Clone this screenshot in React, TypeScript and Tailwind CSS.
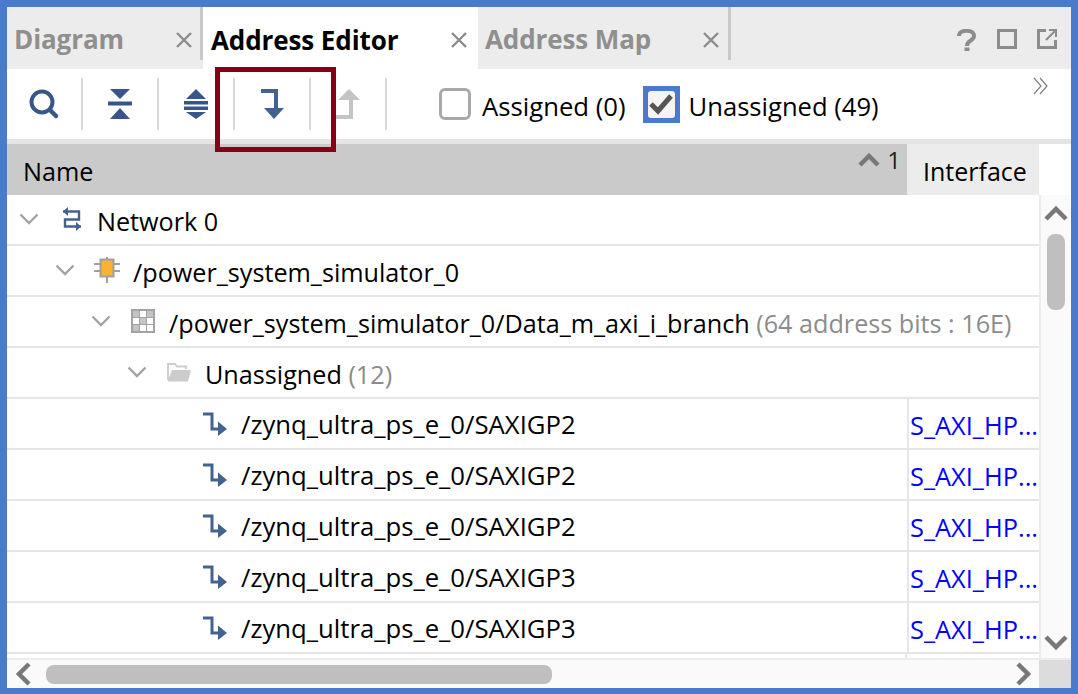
const FONT = "font-['Open_Sans','Noto_Sans',sans-serif]";

function Close() {
  return (
    <svg width="18" height="18" viewBox="0 0 18 18" className="shrink-0">
      <path d="M2 2l14 14M16 2L2 16" stroke="#8c8c8c" strokeWidth="2.4" />
    </svg>
  );
}

function Chevron() {
  return (
    <svg width="20" height="12" viewBox="0 0 20 12" className="shrink-0">
      <path d="M1.5 1.5L10 10l8.5-8.5" fill="none" stroke="#a3a3a3" strokeWidth="2.4" />
    </svg>
  );
}

function NetworkIcon() {
  return (
    <svg width="20" height="24" viewBox="0 0 20 24" className="shrink-0">
      <path d="M1 4.500h16v8H3v7h16" fill="none" stroke="#44628f" strokeWidth="2.400" />
      <path d="M6 0L1 4.500l5 4.500zM14 15l5 4.500-5 4.500z" fill="#44628f" />
    </svg>
  );
}

function CellIcon() {
  return (
    <svg width="26" height="26" viewBox="0 0 26 26" className="shrink-0">
      <path d="M13 0v6M0 7h6M20 7h6M0 14h6M20 14h6M13 19v7" stroke="#a0a0a0" strokeWidth="2" />
      <rect x="6.500" y="2.500" width="13" height="17" fill="#f9b233" stroke="#a0a0a0" strokeWidth="2" />
    </svg>
  );
}

function GridIcon() {
  const white = [[1, 0], [0, 1], [2, 1], [1, 2], [2, 2]];
  return (
    <svg width="24" height="24" viewBox="0 0 24 24" className="shrink-0">
      <rect width="24" height="24" fill="#a3a3a3" />
      {[0, 1, 2].flatMap((y) =>
        [0, 1, 2].map((x) => (
          <rect key={`${x}${y}`} x={2 + x * 7} y={2 + y * 7} width="6" height="6"
            fill={white.some(([a, b]) => a === x && b === y) ? '#ffffff' : '#c4c4c4'} />
        )),
      )}
    </svg>
  );
}

function FolderIcon() {
  return (
    <svg width="24" height="20" viewBox="0 0 24 20" className="shrink-0">
      <path d="M1 18V2h7l2 2.500h9V7" fill="none" stroke="#cfcfcf" strokeWidth="2" />
      <path d="M0.500 19.500L5 8h19l-3 11.500z" fill="#cccccc" />
    </svg>
  );
}

function SlaveIcon() {
  return (
    <svg width="24" height="24" viewBox="0 0 24 24" className="shrink-0">
      <path d="M0 2h9v15h8" fill="none" stroke="#44628f" strokeWidth="3" />
      <path d="M15 9.500l9 7.500-9 7z" fill="#44628f" />
    </svg>
  );
}

const ROWS = [
  { pad: 'pl-[12px]', icon: <NetworkIcon />, gap: 'gap-[23px]', textGap: 'gap-[15px]', text: 'Network 0' },
  { pad: 'pl-[48px]', icon: <CellIcon />, gap: 'gap-[19px]', textGap: 'gap-[13px]', text: '/power_system_simulator_0' },
  { pad: 'pl-[84px]', icon: <GridIcon />, gap: 'gap-[20px]', textGap: 'gap-[14px]', text: '/power_system_simulator_0/Data_m_axi_i_branch', note: '(64 address bits : 16E)' },
  { pad: 'pl-[120px]', icon: <FolderIcon />, gap: 'gap-[20px]', textGap: 'gap-[14px]', text: 'Unassigned', note: '(12)' },
];

const LEAVES = ['SAXIGP2', 'SAXIGP2', 'SAXIGP2', 'SAXIGP3', 'SAXIGP3'];

function ToolButton({ children }: { children: React.ReactNode }) {
  return (
    <div className="w-[76px] h-[52px] border-r-2 border-[#d9d9d9] flex items-center justify-center shrink-0">
      {children}
    </div>
  );
}

export default function App() {
  return (
    <div className={`${FONT} relative w-[1078px] h-[694px] overflow-hidden bg-white border-t-[7px] border-l-[7px] border-r-[7px] border-b-[6px] border-[#4a7acb] flex flex-col text-[25.2px] text-black`}>
      {/* Tabs */}
      <div className="h-[62px] shrink-0 bg-[#ececec] flex">
        <div className="w-[196px] h-[53px] pt-[12px] border-r-[3px] border-[#c8c8c8] flex items-center justify-between pl-[7px] pr-[7px] font-bold text-[26px] text-[#8f8f8f] tracking-[-0.1px]">
          <span>Diagram</span><Close />
        </div>
        <div className="w-[275px] bg-white flex items-start justify-between pl-[8px] pr-[10px] pt-[13px] font-bold text-[26px] tracking-[-0.1px]">
          <span className="leading-[40px]">Address Editor</span>
          <div className="pt-[11px]"><Close /></div>
        </div>
        <div className="w-[253px] h-[53px] pt-[12px] border-r-[3px] border-[#c8c8c8] flex items-center justify-between pl-[7px] pr-[8px] font-bold text-[26px] text-[#8f8f8f] tracking-[-0.1px]">
          <span>Address Map</span><Close />
        </div>
        <div className="flex-1 flex items-start justify-end gap-[20px] pt-[22px] pr-[14px]">
          <svg width="20" height="22" viewBox="0 0 20 22">
            <path d="M2 7c0-7 15-7 15 0 0 5-7 4-7 10" fill="none" stroke="#8c8c8c" strokeWidth="4" />
            <rect x="7.500" y="18.500" width="5" height="3.500" fill="#8c8c8c" />
          </svg>
          <svg width="20" height="20" viewBox="0 0 20 20">
            <rect x="1.500" y="1.500" width="17" height="17" fill="none" stroke="#8c8c8c" strokeWidth="3" />
          </svg>
          <svg width="20" height="20" viewBox="0 0 20 20">
            <path d="M9 1.500H1.500v17h17V11" fill="none" stroke="#8c8c8c" strokeWidth="3" />
            <path d="M9 11l9-9M12 1h7v7" fill="none" stroke="#8c8c8c" strokeWidth="2" />
          </svg>
        </div>
      </div>

      {/* Toolbar */}
      <div className="h-[70px] shrink-0 flex items-center relative">
        <ToolButton>
          <svg width="30" height="30" viewBox="0 0 30 30">
            <circle cx="13" cy="13" r="10.500" fill="none" stroke="#38568a" strokeWidth="4" />
            <path d="M21 21l6 6" stroke="#38568a" strokeWidth="4.500" strokeLinecap="round" />
          </svg>
        </ToolButton>
        <ToolButton>
          <svg width="24" height="30" viewBox="0 0 24 30">
            <path d="M2 0h20L12 10zM0 12.500h24v4H0zM12 19l10 11H2z" fill="#38568a" />
          </svg>
        </ToolButton>
        <ToolButton>
          <svg width="24" height="30" viewBox="0 0 24 30">
            <path d="M12 0l10 10H2zM0 12h24v3.500H0zM0 17.500h24V21H0zM2 23h20L12 30z" fill="#38568a" />
          </svg>
        </ToolButton>
        <ToolButton>
          <svg width="24" height="30" viewBox="0 0 24 30">
            <path d="M1 2h15v18" fill="none" stroke="#44628f" strokeWidth="4" />
            <path d="M6 19h20L16 30z" fill="#44628f" transform="translate(-2 0)" />
          </svg>
        </ToolButton>
        <ToolButton>
          <svg width="24" height="30" viewBox="0 0 24 30">
            <path d="M0 28h15V9" fill="none" stroke="#c4c4c4" strokeWidth="4" />
            <path d="M4 11h22L15 0z" fill="#c4c4c4" transform="translate(-2 0)" />
          </svg>
        </ToolButton>
        <div className="w-[32px] h-[32px] ml-[52px] rounded-[6px] border-[3px] border-[#a8a8a8] bg-white shrink-0" />
        <span className="ml-[11px] mt-[7px] text-[25.7px]">Assigned (0)</span>
        <div className="ml-[17px] w-[37px] h-[37px] bg-[#4a7acb] p-[5px] shrink-0">
          <div className="w-full h-full bg-[#f4f4f4] rounded-[3px] flex items-center justify-center">
            <svg width="24" height="22" viewBox="0 0 24 22">
              <path d="M2 11l7 7L22 3" fill="none" stroke="#555555" strokeWidth="5" />
            </svg>
          </div>
        </div>
        <span className="ml-[9px] mt-[7px] text-[25.6px]">Unassigned (49)</span>
        <svg width="16" height="18" viewBox="0 0 16 18" className="absolute left-[1026px] top-[8px]">
          <path d="M1 1l7 8-7 8M7 1l7 8-7 8" fill="none" stroke="#808080" strokeWidth="1.200" />
        </svg>
      </div>
      <div className="h-[5px] shrink-0 bg-[#e4e4e4]" />

      {/* Column headers */}
      <div className="h-[51px] shrink-0 flex">
        <div className="w-[900px] bg-[#cacaca] flex items-center justify-between pl-[16px] pr-[6px] relative">
          <span className="mt-[4px]">Name</span>
          <div className="flex items-start gap-[7px] -mt-[20px]">
            <svg width="22" height="14" viewBox="0 0 22 14" className="mt-[6px]">
              <path d="M2 12l9-9 9 9" fill="none" stroke="#787878" strokeWidth="4.500" />
            </svg>
            <span className="text-[24px] leading-[26px] text-[#222]">1</span>
          </div>
        </div>
        <div className="w-[132px] bg-[#ececec] pl-[16px] pt-[4px] flex items-center text-[25px]">Interface</div>
      </div>

      {/* Tree table */}
      <div className="flex-1 min-h-0 flex">
        <div className="w-[1032px] shrink-0 overflow-hidden">
          {ROWS.map((r) => (
            <div key={r.text} className="h-[51px] border-b-2 border-[#e6e6e6] flex items-center">
              <div className={`${r.pad} flex items-center ${r.gap} whitespace-nowrap`}>
                <Chevron />
                <div className={`flex items-center ${r.textGap}`}>
                  {r.icon}
                  <span className="mt-[4px]">
                    {r.text}
                    {r.note && <span className="text-[#8c8c8c]"> {r.note}</span>}
                  </span>
                </div>
              </div>
            </div>
          ))}
          {LEAVES.map((s, i) => (
            <div key={i} className="h-[51px] border-b-2 border-[#e6e6e6] flex">
              <div className="w-[900px] shrink-0 flex items-center pl-[196px] gap-[14px] whitespace-nowrap">
                <SlaveIcon />
                <span className="mt-[4px] text-[25.7px]">/zynq_ultra_ps_e_0/{s}</span>
              </div>
              <div className="w-[132px] border-l-2 border-[#e6e6e6] flex items-center pl-[1px] pt-[4px] text-[25.4px] text-[#0000ff] whitespace-nowrap overflow-hidden">
                S_AXI_HP...
              </div>
            </div>
          ))}
          <div className="h-[5px] flex"><div className="w-[900px] border-r-2 border-[#e6e6e6]" /></div>
        </div>
        {/* Vertical scrollbar */}
        <div className="flex-1 bg-[#fafafa] border-l-2 border-[#ececec] flex flex-col items-center pt-[10px] relative">
          <svg width="24" height="16" viewBox="0 0 24 16">
            <path d="M2 14L12 4l10 10" fill="none" stroke="#787878" strokeWidth="4.500" />
          </svg>
          <div className="w-[18px] h-[76px] mt-[13px] rounded-[8px] bg-[#bfbfbf]" />
          <svg width="24" height="16" viewBox="0 0 24 16" className="absolute bottom-[7px]">
            <path d="M2 2l10 10L22 2" fill="none" stroke="#787878" strokeWidth="4.500" />
          </svg>
        </div>
      </div>

      {/* Horizontal scrollbar */}
      <div className="h-[30px] shrink-0 flex bg-[#fafafa] border-t-2 border-[#ececec]">
        <div className="w-[1032px] flex items-center pl-[9px] relative">
          <svg width="16" height="24" viewBox="0 0 16 24">
            <path d="M13 2L3 12l10 10" fill="none" stroke="#787878" strokeWidth="4.500" />
          </svg>
          <div className="ml-[14px] w-[506px] h-[19px] rounded-[8px] bg-[#bfbfbf]" />
          <svg width="16" height="24" viewBox="0 0 16 24" className="absolute right-[8px]">
            <path d="M3 2l10 10L3 22" fill="none" stroke="#787878" strokeWidth="4.500" />
          </svg>
        </div>
        <div className="flex-1 bg-[#dcdcdc]" />
      </div>

      {/* Callout on the toolbar button */}
      <div className="absolute left-[208px] top-[60px] w-[121px] h-[85px] border-[5px] border-[#840016]" />
    </div>
  );
}
